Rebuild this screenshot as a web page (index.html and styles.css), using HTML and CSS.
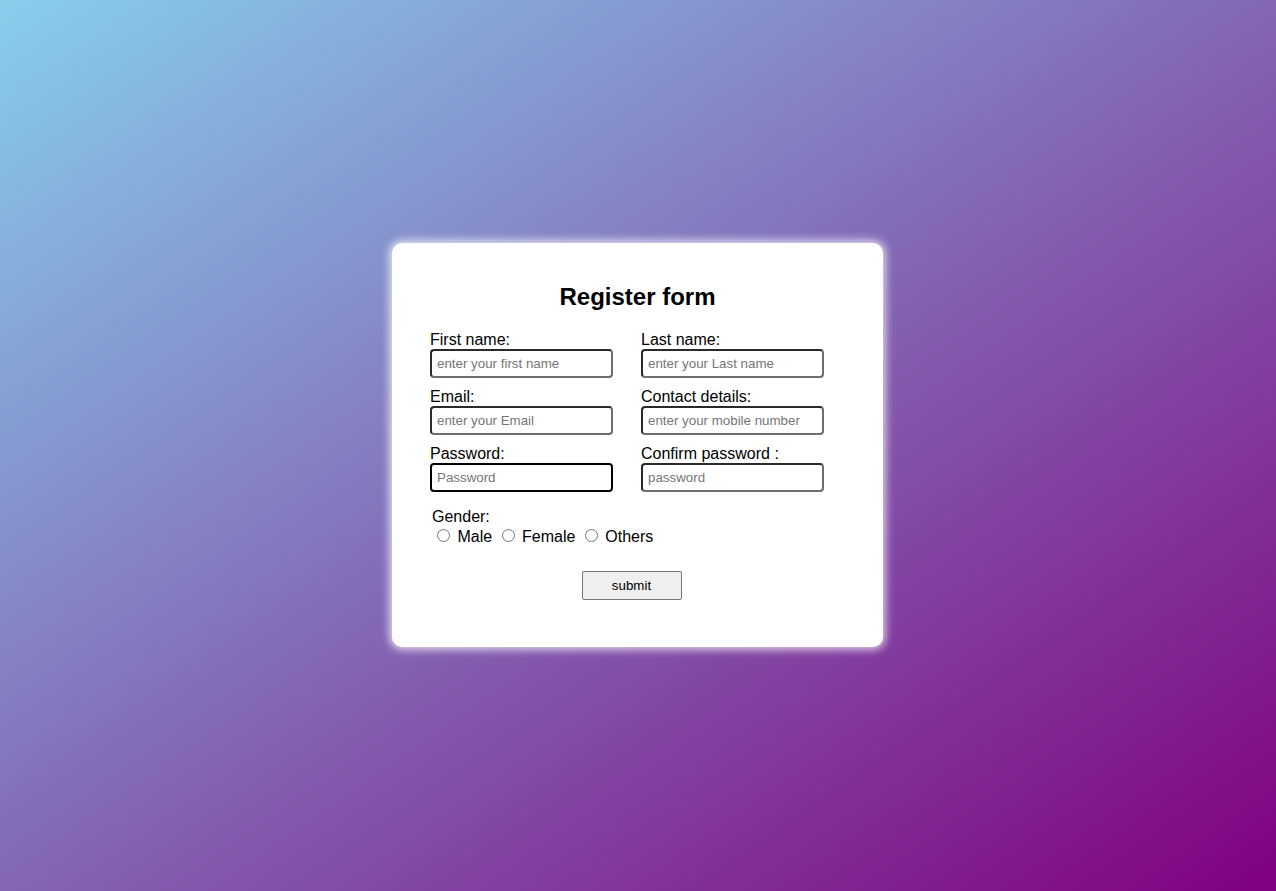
FILE: index.html
```html
<!DOCTYPE html>
<html lang="en">
<head>
<meta charset="utf-8">
<title>Register form</title>
<link rel="stylesheet" href="styles.css">
</head>
<body>
<div class="card">
  <h2 class="title">Register form</h2>
  <form class="form">
    <div class="grid">
      <div class="field">
        <label class="label">First name:</label>
        <input class="input" type="text" placeholder="enter your first name">
      </div>
      <div class="field">
        <label class="label">Last name:</label>
        <input class="input" type="text" placeholder="enter your Last name">
      </div>
      <div class="field">
        <label class="label">Email:</label>
        <input class="input" type="text" placeholder="enter your Email">
      </div>
      <div class="field">
        <label class="label">Contact details:</label>
        <input class="input" type="text" placeholder="enter your mobile number">
      </div>
      <div class="field">
        <label class="label">Password:</label>
        <input class="input input-focus" type="password" placeholder="Password">
      </div>
      <div class="field">
        <label class="label">Confirm password :</label>
        <input class="input" type="password" placeholder="password">
      </div>
    </div>
    <div class="gender">
      <div class="gender-label">Gender:</div>
      <div class="gender-options"><input class="radio" type="radio" name="g"> <label>Male</label> <input class="radio" type="radio" name="g"> <label>Female</label> <input class="radio" type="radio" name="g"> <label>Others</label></div>
    </div>
    <div class="actions">
      <button class="submit" type="button">submit</button>
    </div>
  </form>
</div>
</body>
</html>
```
FILE: styles.css
```css
html, body {
  margin: 0;
  padding: 0;
}
body {
  min-height: 100vh;
  box-sizing: border-box;
  padding: 0 1px 1px 0;
  display: flex;
  align-items: center;
  justify-content: center;
  background: linear-gradient(to bottom right, #87ceeb, #800080);
  font-family: "Liberation Sans", Arial, sans-serif;
  color: #000;
}
.card {
  width: 491px;
  height: 404px;
  box-sizing: border-box;
  background: #fff;
  border-radius: 10px;
  box-shadow: 0 0 10px 2px rgba(255, 255, 255, 0.85);
  padding: 40px 38px 0 38px;
}
.title {
  margin: 0;
  font-size: 24px;
  line-height: 28px;
  font-weight: bold;
  text-align: center;
}
.form {
  margin: 20px 0 0 0;
}
.grid {
  display: grid;
  grid-template-columns: 183px 183px;
  column-gap: 28px;
  row-gap: 10px;
}
.field {
  display: flex;
  flex-direction: column;
}
.label {
  font-size: 16px;
  line-height: 18px;
}
.input {
  width: 183px;
  height: 29px;
  box-sizing: border-box;
  border-width: 2px;
  border-style: solid;
  border-color: #2a2a2a #6f6f6f #6f6f6f #2a2a2a;
  border-radius: 4px;
  padding: 0 5px;
  font-family: "Liberation Sans", Arial, sans-serif;
  font-size: 13.33px;
  outline: none;
  background: #fff;
}
.input::placeholder {
  color: #767676;
}
.input-focus {
  border-color: #000;
}
.gender {
  margin: 16px 0 0 2px;
  font-size: 16px;
}
.gender-label {
  line-height: 18px;
}
.gender-options {
  line-height: 20px;
}
.radio {
  width: 13px;
  height: 13px;
  margin: 3px 3px 0 5px;
}
.actions {
  display: flex;
  justify-content: center;
  margin-top: 24px;
  padding-right: 12px;
}
.submit {
  width: 100px;
  height: 29px;
  box-sizing: border-box;
  background: #efefef;
  border: 1px solid #767676;
  border-radius: 2px;
  font-family: "Liberation Sans", Arial, sans-serif;
  font-size: 13.33px;
  color: #000;
}
```
